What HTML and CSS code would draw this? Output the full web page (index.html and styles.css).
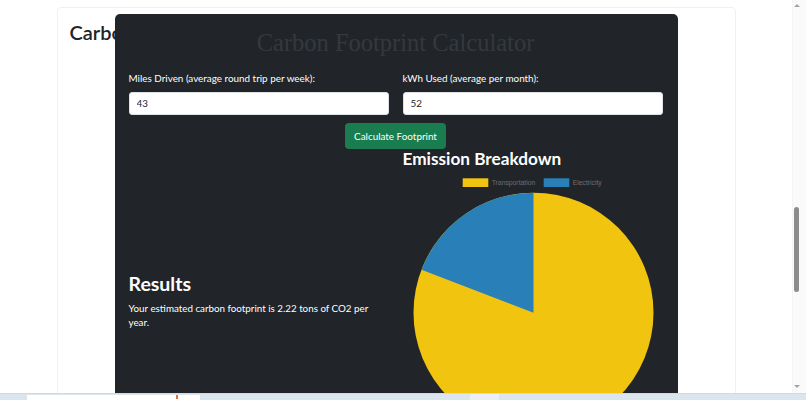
FILE: index.html
```html
<!DOCTYPE html>
<html lang="en">
<head>
    <meta charset="UTF-8">
    <meta name="viewport" content="width=device-width, initial-scale=1.0">
    <title>Carbon Footprint Calculator</title>
    <link rel="stylesheet" href="styles.css">
</head>
<body>
    <div class="page">
        <!-- Page card behind the calculator -->
        <div class="card">
            <h2 class="card-title">Carbon Footprint Calculator</h2>
        </div>

        <!-- Calculator panel -->
        <div class="calc-panel">
            <h1 class="calc-title">Carbon Footprint Calculator</h1>

            <div class="field-row">
                <div class="field">
                    <label for="miles">Miles Driven (average round trip per week):</label>
                    <input id="miles" class="field-input" type="text" value="43">
                </div>
                <div class="field">
                    <label for="kwh">kWh Used (average per month):</label>
                    <input id="kwh" class="field-input" type="text" value="52">
                </div>
            </div>

            <div class="actions">
                <button class="calc-button">Calculate Footprint</button>
            </div>

            <div class="result-row">
                <div class="results">
                    <h3 class="results-title">Results</h3>
                    <p class="results-text">Your estimated carbon footprint is 2.22 tons of CO2 per year.</p>
                </div>
                <div class="breakdown">
                    <h3 class="breakdown-title">Emission Breakdown</h3>
                    <svg class="chart" width="260" height="274" viewBox="0 0 260 274">
                        <rect x="59.7" y="8.3" width="25.6" height="8.7" fill="#f1c40f"/>
                        <text x="88.7" y="15.3" class="legend-text">Transportation</text>
                        <rect x="140.7" y="8.3" width="25.6" height="8.7" fill="#2980b9"/>
                        <text x="169.7" y="15.3" class="legend-text">Electricity</text>
                        <circle cx="130.5" cy="142.7" r="120" fill="#f1c40f"/>
                        <path d="M130.5 142.7 L130.5 22.7 A120 120 0 0 0 18.5 99.7 Z" fill="#2980b9"/>
                    </svg>
                </div>
            </div>
        </div>
    </div>

    <!-- Browser scrollbar -->
    <div class="scrollbar">
        <span class="scroll-arrow up"></span>
        <span class="scroll-thumb"></span>
        <span class="scroll-arrow down"></span>
    </div>

    <!-- Taskbar strip -->
    <div class="taskbar">
        <span class="task-tab"></span>
        <span class="task-mark"></span>
        <span class="task-light"></span>
    </div>
</body>
</html>
```

FILE: styles.css
```css
body {
    margin: 0;
    background: #fff;
    font-family: Lato, "Noto Sans", sans-serif;
    color: #212529;
    overflow: hidden;
    height: 400px;
}

.page {
    position: relative;
    width: 792px;
    height: 400px;
    padding-top: 7px;
    box-sizing: border-box;
}

.card {
    width: 679px;
    height: 600px;
    margin: 0 auto;
    border: 1px solid #f0f0f0;
    border-radius: 4px;
    padding: 0 12px;
    box-sizing: border-box;
}

/* only the start of the heading shows beside the panel */
.card-title {
    width: 46px;
    margin: 12px 0 0;
    overflow: hidden;
    white-space: nowrap;
    font-size: 20px;
    font-weight: 600;
    line-height: 1.2;
    color: #212529;
}

.calc-panel {
    position: absolute;
    top: 14px;
    left: 0;
    right: 0;
    width: 563px;
    height: 430px;
    margin: 0 auto;
    box-sizing: border-box;
    padding: 0 15px 0 14px;
    background: #212529;
    border-radius: 5px;
    color: #fff;
}

.calc-title {
    margin: 14px 0 0;
    font-family: "Liberation Serif", serif;
    font-size: 24.5px;
    font-weight: normal;
    line-height: 1.2;
    text-align: center;
    color: #35393d;
}

.field-row {
    display: flex;
    gap: 14px;
    margin-top: 14px;
}

.field {
    flex: 1;
}

.field label {
    display: block;
    font-size: 9.9px;
    line-height: 15.75px;
    margin-bottom: 5px;
}

.field-input {
    display: block;
    width: 100%;
    height: 22.5px;
    box-sizing: border-box;
    padding: 0 7px;
    border: 1px solid #dee2e6;
    border-radius: 3px;
    background: #fff;
    font-family: inherit;
    font-size: 9.9px;
    color: #212529;
    outline: none;
}

.actions {
    display: flex;
    justify-content: center;
    margin-top: 8px;
}

.calc-button {
    height: 26.5px;
    padding: 0 9.5px;
    border: none;
    border-radius: 4px;
    background: #1a7d50;
    color: #fff;
    font-family: inherit;
    font-size: 9.9px;
}

.result-row {
    display: flex;
    gap: 14px;
    align-items: center;
}

.results,
.breakdown {
    width: 260px;
}

.results {
    padding-top: 8px;
}

.results-title {
    margin: 0 0 5px;
    font-size: 19.5px;
    font-weight: bold;
    line-height: 1.2;
}

.results-text {
    margin: 0;
    font-size: 9.8px;
    line-height: 14px;
    padding-right: 14px;
}

.breakdown-title {
    margin: 0;
    font-size: 17.2px;
    font-weight: bold;
    line-height: 1.2;
}

.chart {
    display: block;
}

.legend-text {
    font-family: "Liberation Sans", Arial, sans-serif;
    font-size: 6.8px;
    fill: #6e6e6e;
}

.scrollbar {
    position: fixed;
    top: 0;
    right: 0;
    width: 14px;
    height: 394px;
    background: #fafafa;
    border-left: 1px solid #f4f4f4;
    box-sizing: border-box;
}

.scroll-thumb {
    position: absolute;
    top: 207px;
    left: 1px;
    width: 5px;
    height: 85px;
    border-radius: 3px;
    background: #8c8c8c;
}

.scroll-arrow {
    position: absolute;
    left: 1px;
    width: 0;
    height: 0;
    border-left: 3px solid transparent;
    border-right: 3px solid transparent;
}

.scroll-arrow.up {
    top: 4px;
    border-bottom: 3px solid #a3a3a3;
}

.scroll-arrow.down {
    top: 385px;
    border-top: 3px solid #a3a3a3;
}

.taskbar {
    position: fixed;
    left: 0;
    right: 0;
    bottom: 0;
    height: 6px;
    background: #dbe5ee;
    border-top: 1px solid #d6d9dc;
}

.task-tab {
    position: absolute;
    left: 27px;
    top: 1px;
    width: 173px;
    height: 5px;
    background: #fff;
}

.task-mark {
    position: absolute;
    left: 176px;
    top: 1px;
    width: 2px;
    height: 4px;
    background: #e3704a;
}

.task-light {
    position: absolute;
    left: 470px;
    top: 0;
    width: 29px;
    height: 6px;
    background: #e9eff5;
}
```
